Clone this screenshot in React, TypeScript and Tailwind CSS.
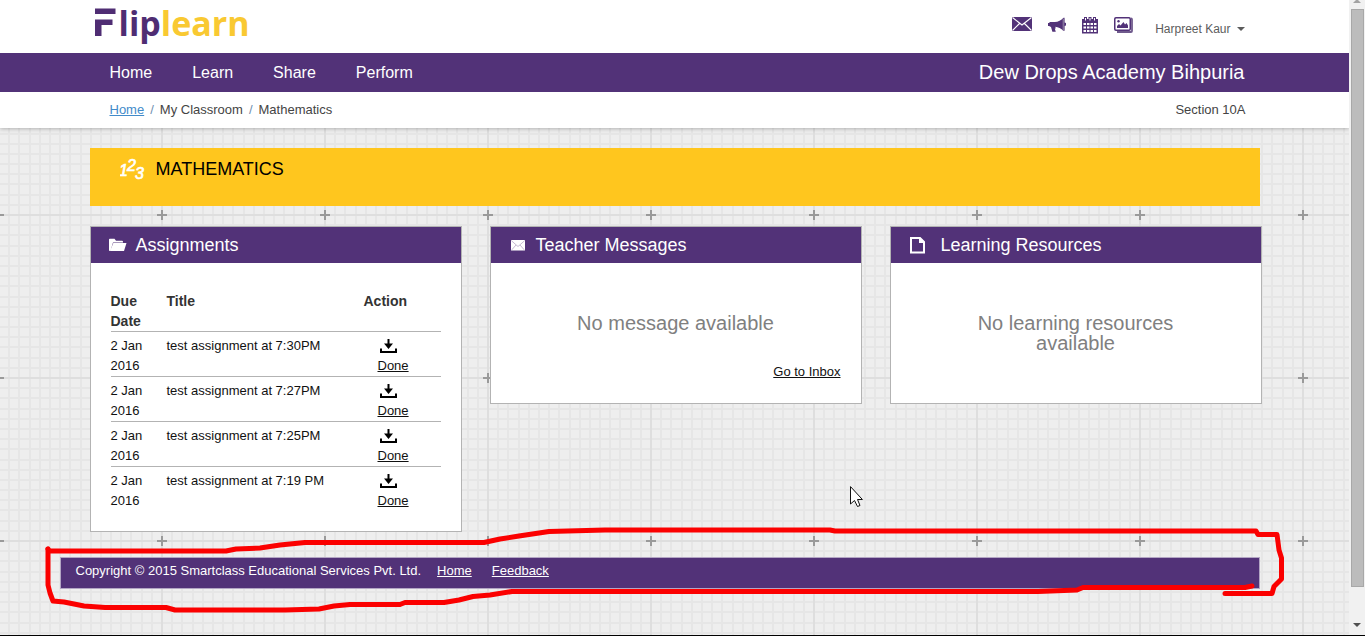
import type { ReactNode } from "react";

const assignments = [
  "test assignment at 7:30PM",
  "test assignment at 7:27PM",
  "test assignment at 7:25PM",
  "test assignment at 7:19 PM",
];

const steps = Array.from({ length: 15 }, (_, i) => Math.round((i + 1) * 10.19));

function GridBackground() {
  return (
    <svg className="absolute inset-0 h-full w-full" aria-hidden="true">
      <defs>
        <pattern id="grid" x="80" y="-30" width="163" height="163" patternUnits="userSpaceOnUse">
          <rect width="163" height="163" fill="#eeeeee" />
          <g transform="translate(82 82)">
            {steps.map((s) => {
              const p = s > 81 ? s - 163 : s;
              return (
                <g key={s} fill="#e6e6e6">
                  <rect x={p - 1} y="-82" width="2" height="163" />
                  <rect x="-82" y={p - 1} width="163" height="2" />
                </g>
              );
            })}
            <rect x="-1" y="-82" width="2" height="163" fill="#dedede" />
            <rect x="-82" y="-1" width="163" height="2" fill="#dedede" />
            <rect x="-1" y="-5" width="2" height="10" fill="#9a9a9a" />
            <rect x="-5" y="-1" width="10" height="2" fill="#9a9a9a" />
          </g>
        </pattern>
      </defs>
      <rect width="100%" height="100%" fill="url(#grid)" />
    </svg>
  );
}

function Logo() {
  return (
    <a href="#" aria-label="Fliplearn" className="flex pl-[5px]">
      <svg width="24" height="32" viewBox="0 0 24 32" fill="#4f2d73" className="mt-2" aria-hidden="true">
        <path d="M0 .5h20.500v5.500H0zM0 11.500h17.500v5.500H6.500v11H0z" />
      </svg>
      <span className="pt-[3px] font-['Open_Sans'] text-[34px] leading-[40px] font-bold text-[#4f2d73]">
        lip<span className="text-[#f9c932]">learn</span>
      </span>
    </a>
  );
}

function MailIcon() {
  return (
    <svg width="20" height="14" viewBox="0 0 20 14">
      <rect width="20" height="14" fill="#523278" />
      <path d="M0.5 0.5L10 8L19.5 0.5M0.5 13.5L7.5 6.5M19.5 13.5L12.5 6.5" fill="none" stroke="#fff" strokeWidth="1.1" />
    </svg>
  );
}

function MegaphoneIcon() {
  return (
    <svg width="18" height="16" viewBox="0 0 18.500 16" fill="#523278">
      <path d="M1.500 5H7C10.500 5 13.500 3 16 0.500H17V5.500L18.500 6V8.500L17 9V14H16C13.500 11.500 10.500 10 7.500 9.800L8 11.500H7L8 15H4.500L3 9.800H2L1.500 9H0V6H1.500Z" />
      <path d="M15 1.500H16.800V13.500H15Z" fill="#84739c" />
    </svg>
  );
}

function CalendarIcon() {
  return (
    <svg width="16" height="17" viewBox="0 0 16 17" fill="#523278">
      <path d="M0 2h2V0h3v2h1.500V0h3v2H11V0h3v2h2v14.500H0z" />
      <path
        d="M1.500 6h2.500v2H1.500zM5 6h2.500v2H5zM8.500 6H11v2H8.500zM12 6h2.500v2H12zM1.500 9.500h2.500v2H1.500zM5 9.500h2.500v2H5zM8.500 9.500H11v2H8.500zM12 9.500h2.500v2H12zM1.500 13h2.500v2H1.500zM5 13h2.500v2H5zM8.500 13H11v2H8.500zM12 13h2.500v2H12zM3 1h1v2.500H3zM7.500 1h1v2.500h-1zM12 1h1v2.500h-1z"
        fill="#fff"
      />
    </svg>
  );
}

function PictureIcon() {
  return (
    <svg width="19" height="16" viewBox="0 0 19 16">
      <path d="M17 1.500Q18 1.500 18 2.500V14Q18 15 17 15H3" fill="none" stroke="#6f5a8c" strokeWidth="1.800" />
      <rect x=".75" y=".75" width="15.500" height="12.500" rx="1.200" fill="#fff" stroke="#523278" strokeWidth="1.500" />
      <path d="M3 11V9l2-2 1.500 1.500L9.500 5l1.500 2.500L12.500 6 14 8.500V11z" fill="#523278" />
      <circle cx="4.500" cy="4.300" r="1.200" fill="#523278" />
    </svg>
  );
}

function DownloadIcon() {
  return (
    <svg width="17" height="14" viewBox="0 0 17 14" className="block">
      <path d="M1 9.500V13H16V9.500" fill="none" stroke="#000" strokeWidth="2" />
      <path d="M7.500 0h2v4.500H13L8.500 10 4 4.500h3.500z" />
    </svg>
  );
}

function FolderIcon() {
  return (
    <svg width="18" height="14" viewBox="0 0 18 14" fill="#fff">
      <path d="M0 1.500Q0 .7 .8 .7H5.500L7 2.700H13Q14 2.700 14 3.700V4.500H4L1.500 13H.8Q0 13 0 12.200Z" />
      <path d="M4.300 5H17.500L15 13H1Z" />
    </svg>
  );
}

function SmallMailIcon() {
  return (
    <svg width="14" height="11" viewBox="0 0 14 11">
      <rect width="14" height="10.500" rx=".5" fill="#fff" />
      <path d="M.5 .8L7 6.500 13.500 .8M.8 9.800L5 5M13.200 9.800L9 5" fill="none" stroke="#9d8bb4" strokeWidth=".6" />
    </svg>
  );
}

function PageIcon() {
  return (
    <svg width="16" height="17" viewBox="0 0 16 17">
      <path d="M1 1H10L14 5V15.500H1Z" fill="none" stroke="#fff" strokeWidth="2" />
      <path d="M9 1V6H14V4.500L10.500 1Z" fill="#fff" />
    </svg>
  );
}

function NumbersIcon() {
  return (
    <svg
      width="26"
      height="24"
      viewBox="0 0 26 24"
      fill="#fff"
      stroke="#fff"
      strokeWidth=".7"
      className="font-['Liberation_Sans'] text-[16px] italic"
      aria-hidden="true"
    >
      <text x="-1" y="19">1</text>
      <text x="7" y="14">2</text>
      <text x="15" y="22">3</text>
    </svg>
  );
}

function Card({ icon, title, children }: { icon: ReactNode; title: string; children: ReactNode }) {
  return (
    <section className="min-h-[178px] border border-[#b3b3b3] bg-white">
      <h2 className="flex h-9 items-center bg-[#523278] pl-[18px] text-[18px] text-white">
        {icon}
        {title}
      </h2>
      {children}
    </section>
  );
}

function Annotation() {
  return (
    <svg
      className="pointer-events-none absolute top-0 left-0"
      width="1365"
      height="636"
      viewBox="0 0 1365 636"
      fill="none"
      stroke="#fb0000"
      strokeWidth="5"
      strokeLinecap="round"
      strokeLinejoin="round"
      aria-hidden="true"
    >
      <path d="M48 549L49 551H226L236 549L260 548L280 545L305 542.500H484L500 539L519 536L549 531.500L605 530H830L835 531H1256L1258 534.500H1277L1279 550L1281.500 558V579L1274 586.500L1272 593.500H1225" />
      <path d="M48 549L48 585L50 593L53 601L64 602L84 606L105 607.500H166L175 610H285L319 609L334 606L350 604.500H400L405 602.500H444L459 600L473 596.500L490 595L512 591.500H1038L1077 590L1083 587.500H1245L1252 586" />
      <path d="M850.500 487V504L854.500 500.500L857.500 506.500L860 505.500L857.500 499.500H862Z" fill="#fff" stroke="#111" strokeWidth="1" />
    </svg>
  );
}

export default function App() {
  return (
    <div className="relative flex min-h-screen border-b border-black bg-[#f1f1f1] font-['Liberation_Sans',Arial,sans-serif] text-[13px] leading-5 text-[#111]">
      <div className="relative isolate flex-1 overflow-x-clip">
        <div className="absolute inset-0 -z-10">
          <GridBackground />
        </div>

        <header className="bg-white shadow-[0_1px_4px_rgba(0,0,0,0.25)]">
          <div className="mx-auto flex h-[53px] max-w-[1170px] justify-between">
            <Logo />
            <div className="flex items-start pt-[17px] pr-[15px]">
              <div className="flex gap-4">
                <a href="#" aria-label="Messages"><MailIcon /></a>
                <a href="#" aria-label="Announcements"><MegaphoneIcon /></a>
                <a href="#" aria-label="Calendar"><CalendarIcon /></a>
                <a href="#" aria-label="Gallery"><PictureIcon /></a>
              </div>
              <button type="button" className="mt-0.5 ml-[22px] flex items-center gap-1.5 text-[12px] leading-5 text-[#5c5c5c]">
                Harpreet Kaur
                <svg width="8" height="4" viewBox="0 0 8 4" fill="#5c5c5c"><path d="M0 0h8L4 4z" /></svg>
              </button>
            </div>
          </div>
          <nav className="bg-[#523278] text-white">
            <div className="mx-auto flex h-[39px] max-w-[1170px] items-center justify-between pr-[15px] pl-5">
              <ul className="flex gap-10 pt-px text-[16px]">
                {["Home", "Learn", "Share", "Perform"].map((item) => (
                  <li key={item}><a href="#">{item}</a></li>
                ))}
              </ul>
              <span className="pb-px text-[20px]">Dew Drops Academy Bihpuria</span>
            </div>
          </nav>
          <div className="mx-auto flex h-9 max-w-[1170px] items-center justify-between pr-[14px] pl-5 text-[#444]">
            <div className="flex gap-[6px]">
              <a href="#" className="text-[#428bca] underline">Home</a>
              <span className="text-[#6f8fb0]">/</span>
              <span>My Classroom</span>
              <span className="text-[#6f8fb0]">/</span>
              <span>Mathematics</span>
            </div>
            <span>Section 10A</span>
          </div>
        </header>

        <main className="mx-auto max-w-[1170px] pt-5">
          <div className="flex h-[58px] items-start gap-2.5 bg-[#ffc61e] pt-[9px] pl-[30px]">
            <NumbersIcon />
            <h1 className="text-[18px] leading-6 text-black">MATHEMATICS</h1>
          </div>

          <div className="-mr-0.5 grid grid-cols-3 items-start gap-7 pt-5">
            <Card icon={<span className="mr-[9px]"><FolderIcon /></span>} title="Assignments">
              <div className="px-5 pt-7 pb-5">
                <table className="w-full table-fixed border-collapse text-left">
                  <colgroup>
                    <col className="w-14" />
                    <col />
                    <col className="w-[77px]" />
                  </colgroup>
                  <thead>
                    <tr className="align-top text-[14px] text-[#333]">
                      <th className="pr-4">Due Date</th>
                      <th>Title</th>
                      <th>Action</th>
                    </tr>
                  </thead>
                  <tbody>
                    {assignments.map((title) => (
                      <tr key={title} className="border-t border-[#b3b3b3] align-top">
                        <td className="pt-1 pr-5">2 Jan 2016</td>
                        <td className="pt-1">{title}</td>
                        <td className="pt-[7px] pl-[14px]">
                          <a href="#" aria-label="Download" className="block w-5 pl-0.5"><DownloadIcon /></a>
                          <a href="#" className="mt-[3px] block underline">Done</a>
                        </td>
                      </tr>
                    ))}
                  </tbody>
                </table>
              </div>
            </Card>

            <Card icon={<span className="mr-[11px] ml-[2px]"><SmallMailIcon /></span>} title="Teacher Messages">
              <div className="px-5 pt-[50px] pb-5">
                <p className="text-center text-[20px] leading-5 text-[#808080]">No message available</p>
                <p className="pt-[30px] text-right leading-[18px]"><a href="#" className="underline">Go to Inbox</a></p>
              </div>
            </Card>

            <Card icon={<span className="mr-[15px] ml-px"><PageIcon /></span>} title="Learning Resources">
              <div className="px-[70px] pt-[50px] pb-5">
                <p className="text-center text-[20px] leading-5 text-[#808080]">No learning resources available</p>
              </div>
            </Card>
          </div>

          <footer className="mt-[25px] -ml-[30px] flex h-8 items-start border border-[#b3a6c4] bg-[#523278] pt-[3px] pl-[15px] text-white">
            <span>Copyright © 2015 Smartclass Educational Services Pvt. Ltd.</span>
            <a href="#" className="ml-4 underline">Home</a>
            <a href="#" className="ml-5 underline">Feedback</a>
          </footer>
        </main>
      </div>

      <div className="flex w-4 flex-col items-center justify-between bg-[#f1f1f1]" aria-hidden="true">
        <svg width="8" height="4" viewBox="0 0 8 4" fill="#a3a3a3"><path d="M4 -1L8 3H0z" /></svg>
        <div className="mt-[5px] mb-9 w-[13px] flex-1 border border-[#a8a8a8] bg-[#bcbcbc]" />
        <svg width="8" height="4" viewBox="0 0 8 4" fill="#505050" className="mb-2"><path d="M0 0h8L4 4z" /></svg>
      </div>

      <Annotation />
    </div>
  );
}
